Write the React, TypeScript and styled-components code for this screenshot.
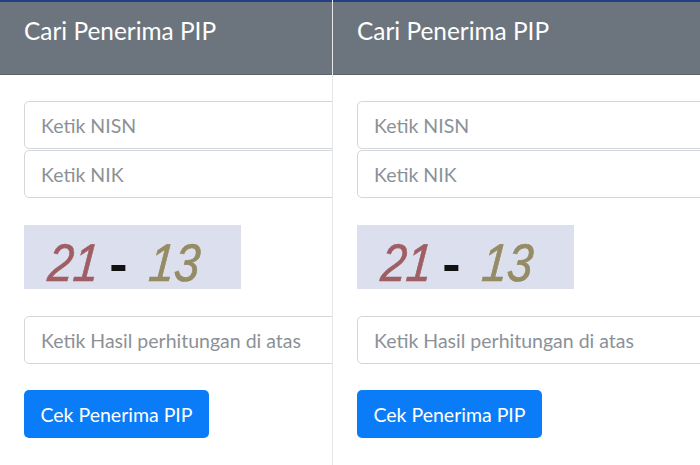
import styled, { createGlobalStyle } from "styled-components";

const GlobalStyle = createGlobalStyle`
  html, body {
    margin: 0;
    padding: 0;
    background: #ffffff;
  }
  body {
    font-family: "Lato", "Noto Sans", sans-serif;
  }
`;

function Screen({ divider }: { divider?: boolean }) {
  return (
    <Panel $divider={divider}>
      <Header>
        <Title>Cari Penerima PIP</Title>
      </Header>
      <Body>
        <Stack>
          <Field placeholder="Ketik NISN" />
          <Field placeholder="Ketik NIK" />
        </Stack>
        <Captcha>
          <Digits $color="#9a5458">21</Digits>
          <Dash>-</Dash>
          <Digits $color="#8f8459">13</Digits>
        </Captcha>
        <Field placeholder="Ketik Hasil perhitungan di atas" />
        <SubmitButton>Cek Penerima PIP</SubmitButton>
      </Body>
    </Panel>
  );
}

export default function App() {
  return (
    <>
      <GlobalStyle />
      <Page>
        <Screen divider />
        <Screen />
      </Page>
    </>
  );
}

const Page = styled.div`
  display: grid;
  grid-template-columns: 333px 1fr;
  width: 700px;
  height: 465px;
  overflow: hidden;
`;

const Panel = styled.section<{ $divider?: boolean }>`
  display: flex;
  flex-direction: column;
  min-width: 0;
  overflow: hidden;
  border-right: ${(p) => (p.$divider ? "1px solid #e4e6e8" : "none")};
`;

const Header = styled.header`
  height: 75px;
  flex-shrink: 0;
  background: #6c757d;
  border-top: 2px solid #233f86;
  border-bottom: 1px solid #5d656c;
  padding: 13px 0 0 24px;
  box-sizing: border-box;
`;

const Title = styled.h1`
  margin: 0;
  color: #ffffff;
  font-size: 24.4px;
  font-weight: 400;
  line-height: 32px;
  white-space: nowrap;
`;

const Body = styled.div`
  display: flex;
  flex-direction: column;
  align-items: flex-start;
  gap: 27px;
  width: 420px;
  padding: 26px 0 0 24px;
`;

const Stack = styled.div`
  display: flex;
  flex-direction: column;
  gap: 1px;
  align-self: stretch;
`;

const Field = styled.input`
  align-self: stretch;
  height: 48px;
  box-sizing: border-box;
  border: 1px solid #d3d7db;
  border-radius: 5px;
  padding: 0 16px;
  font-family: "Lato", "Noto Sans", sans-serif;
  font-size: 19.5px;
  color: #495057;
  background: #ffffff;
  outline: none;

  &::placeholder {
    color: #8b9197;
  }
`;

const Captcha = styled.div`
  display: flex;
  align-items: baseline;
  width: 217px;
  height: 64px;
  box-sizing: border-box;
  padding: 11px 0 0 22px;
  background: #dcdfee;
  font-family: "Liberation Sans", sans-serif;
  white-space: nowrap;
`;

const Digits = styled.span<{ $color: string }>`
  display: inline-block;
  color: ${(p) => p.$color};
  font-size: 53px;
  line-height: 1;
  font-style: italic;
  -webkit-text-stroke: 0.7px ${(p) => p.$color};
  transform: skewX(-5deg) scaleX(0.86);
  transform-origin: left bottom;
  margin-right: -8px;
  opacity: 0.92;
`;

const Dash = styled.span`
  display: inline-block;
  color: #111111;
  font-size: 50px;
  line-height: 1;
  font-weight: 700;
  transform: scaleX(1.1);
  margin: 0 20px 0 13px;
`;

const SubmitButton = styled.button`
  margin-top: -1px;
  width: 185px;
  height: 48px;
  border: none;
  border-radius: 5px;
  background: #0a7cf8;
  color: #ffffff;
  font-family: "Lato", "Noto Sans", sans-serif;
  font-size: 19.5px;
  cursor: pointer;
`;
